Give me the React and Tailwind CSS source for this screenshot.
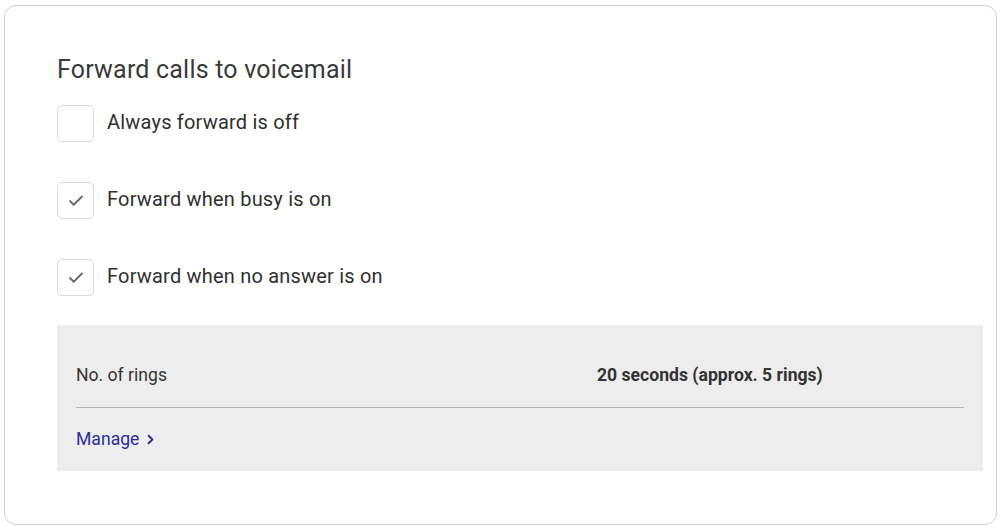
import { Check, ChevronRight } from 'lucide-react'

const options = [
    { label: 'Always forward is off', on: false },
    { label: 'Forward when busy is on', on: true },
    { label: 'Forward when no answer is on', on: true },
]

export default function App() {
    return (
        <div className="w-[1003px] h-[529px] bg-white pt-[5px] pl-[4px]" style={{ fontFamily: 'Roboto, "Liberation Sans", sans-serif' }}>
            <div className="w-[993px] h-[520px] border border-[#cfcfcf] rounded-[12px] pl-[52px] pr-[13px] pt-[49px]">
                <h2 className="text-[25px] leading-[30px] tracking-[0.2px] text-[#3a3a3a] font-normal">Forward calls to voicemail</h2>

                {/* Options */}
                <div className="mt-[20px] flex flex-col gap-[40px]">
                    {options.map(o => (
                        <div key={o.label} className="flex items-center h-[37px]">
                            <div className="w-[37px] h-[37px] rounded-[5px] border border-[#dadada] bg-white flex items-center justify-center">
                                {o.on && <Check className="w-[18px] h-[18px] text-[#666]" strokeWidth={2.4} />}
                            </div>
                            <span className="ml-[13px] pb-[3px] text-[20px] leading-[26px] tracking-[0.2px] text-[#2f2f2f]">{o.label}</span>
                        </div>
                    ))}
                </div>

                {/* Rings panel */}
                <div className="mt-[29px] bg-[#ededed] px-[19px] pt-[38px] pb-[20px]">
                    <div className="flex text-[17.6px] leading-[24px] text-[#333]">
                        <span className="w-[521px]">No. of rings</span>
                        <span className="font-bold">20 seconds (approx. 5 rings)</span>
                    </div>
                    <div className="mt-[20px] h-px bg-[#b3b3b3]" />
                    <a className="mt-[19px] flex items-center gap-[4px] text-[17.6px] leading-[24px] text-[#2a2d9c]">
                        Manage <ChevronRight className="w-[15px] h-[15px]" strokeWidth={3} />
                    </a>
                </div>
            </div>
        </div>
    )
}
